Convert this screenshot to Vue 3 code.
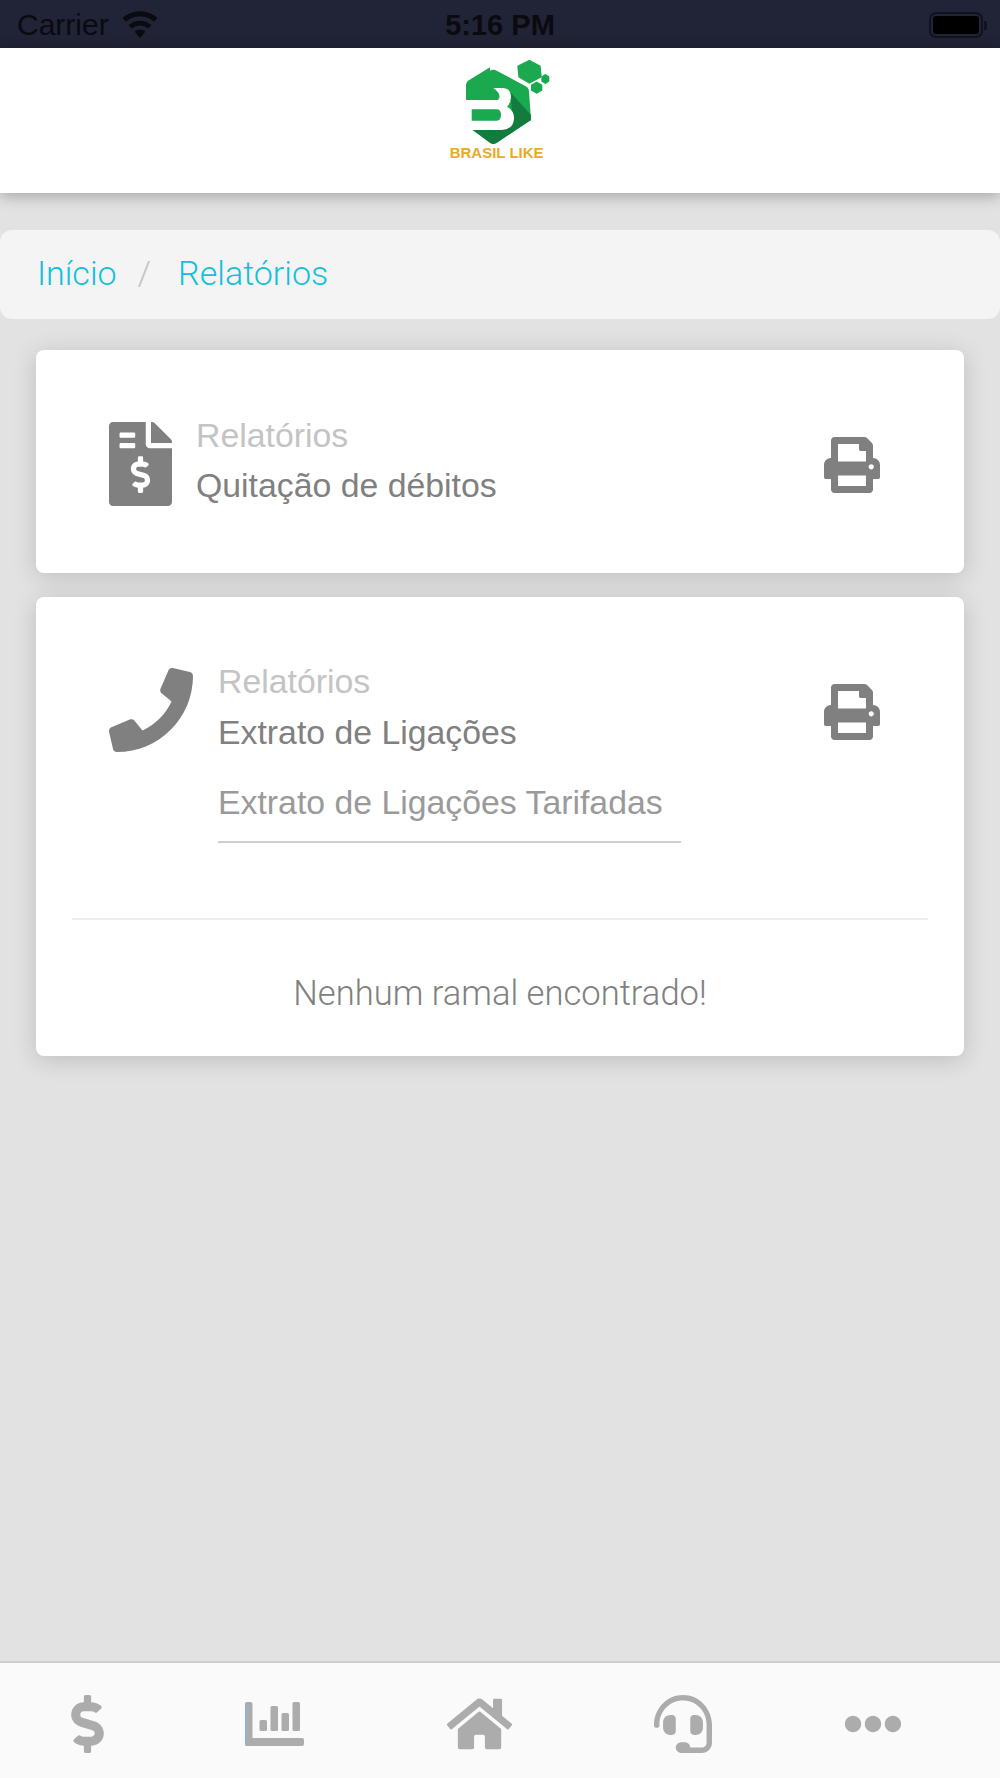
<template>
  <div class="screen">
    <div class="status-bar">
      <div class="status-left">
        <span>Carrier</span>
        <svg class="wifi" viewBox="0 0 38 28" width="38" height="28">
          <path d="M19 27 13.5 20.5a8.5 8.5 0 0 1 11 0z" />
          <path d="M10.8 17.6 7.6 13.9a17.5 17.5 0 0 1 22.8 0l-3.2 3.7a12.6 12.6 0 0 0-16.4 0z" />
          <path d="M4.9 10.8 1.5 6.8a26.5 26.5 0 0 1 35 0l-3.4 4a21.4 21.4 0 0 0-28.2 0z" />
        </svg>
      </div>
      <span class="status-time">5:16 PM</span>
      <div class="battery">
        <div class="battery-body"><div class="battery-fill"></div></div>
        <div class="battery-tip"></div>
      </div>
    </div>

    <header class="app-header">
      <svg class="logo" viewBox="0 0 420 345" width="140" height="115">
        <path fill="#1aa94f" d="M180 62q10-6 20 0l87 47q10 5 10 16l6 85-113 73-62-43-20-90v-45q0-8 6-13l66-40z" />
        <path fill="#127c3e" d="M240 125l63 70v15l-103 69q-10 6-20 0l-52-39h90l30-40z" />
        <path fill="#fff" d="M100 150h22l10 0h72q14-16-14-36h30q22 2 23 26 0 18-12 30 22 12 21 36-2 32-38 34H100z" />
        <path fill="#1aa94f" d="M108 150l5-12 9 7 10 5z" />
        <path fill="#1aa94f" d="M125 178h75q13 0 13 17t-13 17h-75z" />
        <g fill="#1aa94f" stroke="#1aa94f" stroke-width="6" stroke-linejoin="round">
          <path d="M298 33l31 16 3 31-34 18-30-18-3-31z" />
          <path d="M346 75l9 6v12l-9 6-9-6V81z" />
          <path d="M320 98l14 8v14l-14 8-14-8v-14z" />
        </g>
        <text x="59" y="323" class="logo-text">BRASIL LIKE</text>
      </svg>
    </header>

    <main class="content">
      <nav class="breadcrumb">
        <a>Início</a>
        <span class="crumb-sep">/</span>
        <a>Relatórios</a>
      </nav>

      <section class="card">
        <div class="card-row">
          <svg class="type-icon" viewBox="0 0 384 512" width="63" height="84">
            <path d="M377 105L279.1 7c-4.5-4.5-10.6-7-17-7H256v128h128v-6.1c0-6.3-2.5-12.4-7-16.9zm-153 31V0H24C10.7 0 0 10.7 0 24v464c0 13.3 10.7 24 24 24h336c13.3 0 24-10.7 24-24V160H248c-13.2 0-24-10.8-24-24zM64 72c0-4.42 3.58-8 8-8h80c4.42 0 8 3.58 8 8v16c0 4.42-3.58 8-8 8H72c-4.42 0-8-3.58-8-8V72zm0 64c0-4.42 3.58-8 8-8h80c4.42 0 8 3.58 8 8v16c0 4.42-3.58 8-8 8H72c-4.42 0-8-3.58-8-8v-16zm144 263.88V424c0 4.42-3.58 8-8 8h-16c-4.42 0-8-3.58-8-8v-24.29c-11.29-.58-22.27-4.52-31.37-11.35-3.9-2.93-4.1-8.77-.57-12.14l11.75-11.21c2.77-2.64 6.89-2.76 10.13-.73 3.87 2.42 8.26 3.72 12.82 3.72h28.11c6.5 0 11.8-5.92 11.8-13.19 0-5.95-3.61-11.19-8.77-12.73l-45-13.5c-18.59-5.58-31.58-23.42-31.58-43.39 0-24.52 19.05-44.44 42.67-45.07V216c0-4.42 3.58-8 8-8h16c4.42 0 8 3.58 8 8v24.29c11.29.58 22.27 4.51 31.37 11.35 3.9 2.93 4.1 8.77.57 12.14l-11.75 11.21c-2.77 2.64-6.89 2.76-10.13.73-3.87-2.43-8.26-3.72-12.82-3.72h-28.11c-6.5 0-11.8 5.92-11.8 13.19 0 5.95 3.61 11.19 8.77 12.73l45 13.5c18.59 5.58 31.58 23.42 31.58 43.39 0 24.53-19.05 44.44-42.67 45.07z" />
          </svg>
          <div class="card-text">
            <p class="card-kicker">Relatórios</p>
            <p class="card-title">Quitação de débitos</p>
          </div>
          <svg class="print-icon" viewBox="0 0 512 512" width="56" height="56">
            <path :d="printPath" />
          </svg>
        </div>
      </section>

      <section class="card card-calls">
        <div class="card-row calls-row">
          <svg class="type-icon phone" viewBox="0 0 512 512" width="84" height="84">
            <path d="M493.4 24.6l-104-24c-11.3-2.6-22.9 3.3-27.5 13.9l-48 112c-4.2 9.8-1.4 21.3 6.9 28l60.6 49.6c-36 76.7-98.9 140.5-177.2 177.2l-49.6-60.6c-6.8-8.3-18.2-11.1-28-6.9l-112 48C3.9 366.5-2 378.1.6 389.4l24 104C27.1 504.2 36.7 512 48 512c256.1 0 464-207.5 464-464 0-11.2-7.7-20.9-18.6-23.4z" />
          </svg>
          <div class="card-text calls-text">
            <p class="card-kicker">Relatórios</p>
            <p class="card-title">Extrato de Ligações</p>
            <div class="fake-select">Extrato de Ligações Tarifadas</div>
          </div>
          <svg class="print-icon" viewBox="0 0 512 512" width="56" height="56">
            <path :d="printPath" />
          </svg>
        </div>
        <p class="empty-msg">Nenhum ramal encontrado!</p>
      </section>
    </main>

    <footer class="tabs">
      <div class="tab">
        <svg viewBox="0 0 288 512" width="33" height="58">
          <path d="M209.2 233.4l-108-31.6C88.7 198.2 80 186.5 80 173.5c0-16.3 13.2-29.5 29.5-29.5h66.3c12.2 0 24.2 3.7 34.2 10.5 6.1 4.1 14.3 3.1 19.5-2l34.8-34c7.1-6.9 6.1-18.4-1.8-24.5C238 74.8 207.4 64.1 176 64V16c0-8.8-7.2-16-16-16h-32c-8.8 0-16 7.2-16 16v48h-2.5C45.8 64-5.4 118.7.5 183.6c4.2 46.1 39.4 83.6 83.8 96.6l102.5 30c12.5 3.7 21.2 15.3 21.2 28.3 0 16.3-13.2 29.5-29.5 29.5h-66.3C100 368 88 364.3 78 357.5c-6.1-4.1-14.3-3.1-19.5 2l-34.8 34c-7.1 6.9-6.1 18.4 1.8 24.5 24.5 19.2 55.1 29.9 86.5 30v48c0 8.8 7.2 16 16 16h32c8.8 0 16-7.2 16-16v-48.2c46.6-.9 90.3-28.6 105.7-72.7 21.5-61.6-14.6-124.8-72.5-141.7z" />
        </svg>
      </div>
      <div class="tab">
        <svg viewBox="0 0 59 44" width="59" height="44">
          <rect x="0" y="0" width="7.500" height="44" rx="2" />
          <rect x="0" y="36" width="59" height="8" rx="2" />
          <rect x="14.500" y="18" width="7.500" height="11" rx="1.500" />
          <rect x="25.500" y="4" width="7.500" height="25" rx="1.500" />
          <rect x="36.500" y="11" width="7.500" height="18" rx="1.500" />
          <rect x="47.500" y="0" width="7.500" height="29" rx="1.500" />
          <rect x="0" y="1" width="1" height="41" fill="#7ab8de" />
        </svg>
      </div>
      <div class="tab">
        <svg viewBox="0 0 576 512" width="65" height="58">
          <path d="M280.37 148.26L96 300.11V464a16 16 0 0 0 16 16l112.06-.29a16 16 0 0 0 15.92-16V368a16 16 0 0 1 16-16h64a16 16 0 0 1 16 16v95.64a16 16 0 0 0 16 16.05L464 480a16 16 0 0 0 16-16V300L295.67 148.26a12.19 12.19 0 0 0-15.3 0zM571.6 251.47L488 182.56V44.05a12 12 0 0 0-12-12h-56a12 12 0 0 0-12 12v72.61L318.47 43a48 48 0 0 0-61 0L4.34 251.47a12 12 0 0 0-1.6 16.9l25.5 31A12 12 0 0 0 45.15 301l235.22-193.74a12.19 12.19 0 0 1 15.3 0L530.9 301a12 12 0 0 0 16.9-1.6l25.5-31a12 12 0 0 0-1.7-16.93z" />
        </svg>
      </div>
      <div class="tab">
        <svg viewBox="0 0 512 512" width="58" height="58">
          <path d="M192 208c0-17.67-14.33-32-32-32h-16c-35.35 0-64 28.65-64 64v48c0 35.35 28.65 64 64 64h16c17.67 0 32-14.33 32-32V208zm176 144c35.35 0 64-28.65 64-64v-48c0-35.35-28.65-64-64-64h-16c-17.67 0-32 14.33-32 32v112c0 17.67 14.33 32 32 32h16zM256 0C113.18 0 4.58 118.83 0 256v16c0 8.84 7.16 16 16 16h16c8.84 0 16-7.16 16-16v-16c0-114.69 93.31-208 208-208s208 93.31 208 208h-.12c.08 2.43.12 165.72.12 165.72 0 23.35-18.93 42.28-42.28 42.28H320c0-26.51-21.49-48-48-48h-32c-26.51 0-48 21.49-48 48s21.49 48 48 48h181.72c49.86 0 90.28-40.42 90.28-90.28V256C507.42 118.83 398.82 0 256 0z" />
        </svg>
      </div>
      <div class="tab">
        <svg viewBox="0 0 512 512" width="58" height="58">
          <path d="M328 256c0 39.8-32.2 72-72 72s-72-32.2-72-72 32.2-72 72-72 72 32.2 72 72zm104-72c-39.8 0-72 32.2-72 72s32.2 72 72 72 72-32.2 72-72-32.2-72-72-72zm-352 0c-39.8 0-72 32.2-72 72s32.2 72 72 72 72-32.2 72-72-32.2-72-72-72z" />
        </svg>
      </div>
    </footer>
  </div>
</template>

<script setup>
const printPath = 'M448 192V77.25c0-8.49-3.37-16.62-9.37-22.63L393.37 9.37c-6-6-14.14-9.37-22.63-9.37H96C78.33 0 64 14.33 64 32v160c-35.35 0-64 28.65-64 64v112c0 8.84 7.16 16 16 16h48v96c0 17.67 14.33 32 32 32h320c17.67 0 32-14.33 32-32v-96h48c8.84 0 16-7.16 16-16V256c0-35.35-28.65-64-64-64zm-64 256H128v-96h256v96zm0-224H128V64h192v48c0 8.84 7.16 16 16 16h48v96zm48 72c-13.25 0-24-10.75-24-24 0-13.26 10.75-24 24-24s24 10.74 24 24c0 13.25-10.75 24-24 24z'
</script>

<style>
html,
body {
  margin: 0;
  background: #e2e2e2;
}
</style>

<style scoped>
.screen {
  width: 1000px;
  height: 1778px;
  display: flex;
  flex-direction: column;
  background: #e2e2e2;
  font-family: "Liberation Sans", Arial, sans-serif;
  overflow: hidden;
}

p {
  margin: 0;
}

.status-bar {
  height: 48px;
  flex: none;
  box-sizing: border-box;
  display: flex;
  align-items: center;
  justify-content: space-between;
  padding: 2px 13px 0 17px;
  background: #212336;
  color: #0a0a10;
  font-size: 30px;
  position: relative;
}

.status-left {
  display: flex;
  align-items: center;
  gap: 12px;
}

.wifi {
  fill: #0a0a10;
}

.status-time {
  position: absolute;
  left: 0;
  right: 0;
  text-align: center;
  font-weight: 700;
  font-size: 29px;
}

.battery {
  display: flex;
  align-items: center;
  gap: 1px;
}

.battery-body {
  width: 54px;
  height: 26px;
  padding: 2px;
  box-sizing: border-box;
  border: 2px solid #11121c;
  border-radius: 7px;
}

.battery-fill {
  height: 100%;
  background: #000;
  border-radius: 3px;
}

.battery-tip {
  width: 3px;
  height: 9px;
  background: #11121c;
  border-radius: 0 2px 2px 0;
}

.app-header {
  height: 145px;
  flex: none;
  display: flex;
  justify-content: center;
  padding-top: 2px;
  box-sizing: border-box;
  background: #fff;
  box-shadow: 0 3px 14px rgba(0, 0, 0, 0.28);
  position: relative;
}

.logo-text {
  font-family: "Liberation Sans", Arial, sans-serif;
  font-weight: 700;
  font-size: 45px;
  fill: #e9a92a;
}

.content {
  flex: 1;
  padding-top: 37px;
}

.breadcrumb {
  height: 89px;
  box-sizing: border-box;
  display: flex;
  align-items: center;
  padding: 0 37px 3px;
  border-radius: 12px;
  background: #f4f4f4;
  font-family: Roboto, sans-serif;
  font-size: 34px;
  font-weight: 300;
  color: #12c0dc;
}

.crumb-sep {
  margin: 0 27px 0 21px;
  color: #c4c4c4;
}

.card {
  margin: 31px 36px 0;
  border-radius: 8px;
  background: #fff;
  box-shadow: 0 4px 24px rgba(0, 0, 0, 0.16);
}

.card + .card {
  margin-top: 24px;
}

.card-row {
  height: 223px;
  box-sizing: border-box;
  display: flex;
  align-items: center;
  padding: 0 84px 0 73px;
  fill: #808080;
}

.type-icon {
  flex: none;
  margin-top: 4px;
}

.card-text {
  flex: 1;
  margin-left: 24px;
  margin-top: -3px;
}

.card-kicker {
  font-size: 33.800px;
  line-height: 50px;
  color: #c4c4c4;
}

.card-title {
  font-size: 33.800px;
  line-height: 50px;
  color: #808080;
}

.print-icon {
  flex: none;
  margin-top: 6px;
}

.calls-row {
  height: auto;
  align-items: flex-start;
  padding-top: 70px;
}

.calls-row .phone {
  margin-top: 1px;
}

.calls-row .print-icon {
  margin-top: 17px;
}

.calls-text {
  margin-left: 25px;
  margin-top: -11px;
}

.calls-text .card-title {
  margin-top: 1px;
}

.fake-select {
  width: 463px;
  margin-top: 13px;
  padding: 11px 0 17.500px;
  border-bottom: 2px solid #cfcfcf;
  font-size: 33.800px;
  line-height: 42px;
  color: #9a9a9a;
}

.empty-msg {
  margin: 75px 36px 0;
  padding: 52px 0 42px;
  border-top: 2px solid #ededed;
  text-align: center;
  font-family: Roboto, sans-serif;
  font-weight: 300;
  font-size: 34.600px;
  line-height: 42px;
  color: #808080;
}

.tabs {
  height: 117px;
  flex: none;
  box-sizing: border-box;
  display: grid;
  grid-template-columns: 175px 198px 213px 194px 186px;
  padding-right: 34px;
  border-top: 2px solid #cdcdcd;
  background: #fafafa;
  fill: #abacab;
}

.tab {
  display: flex;
  align-items: flex-start;
  justify-content: center;
  padding-top: 32px;
}

.tab:nth-child(2) {
  padding-top: 39px;
}
</style>
